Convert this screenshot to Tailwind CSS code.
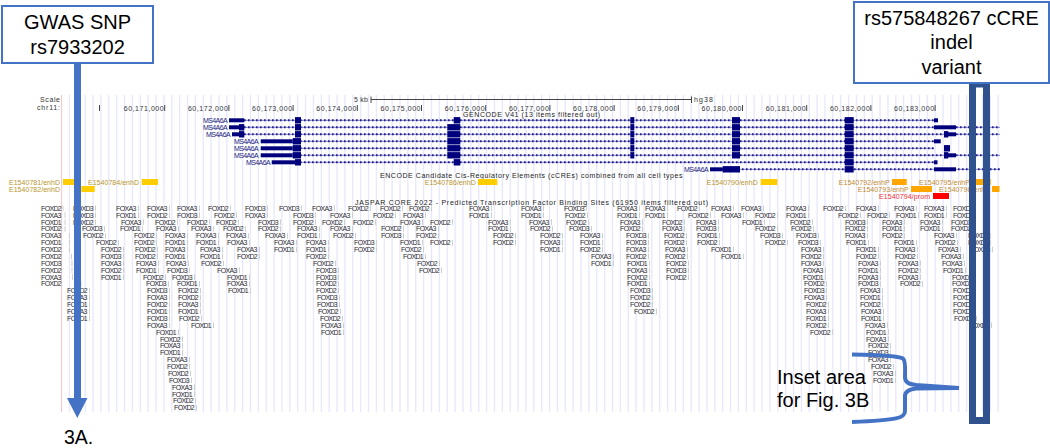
<!DOCTYPE html>
<html lang="en">
<head>
  <meta charset="UTF-8" />
  <title>MS4A6A locus, FOX binding sites</title>
  <script src="https://cdn.jsdelivr.net/npm/@tailwindcss/browser@4"></script>
</head>
<body class="bg-white">
  <div class="relative w-[1050px] h-[448px] overflow-hidden bg-white font-['Liberation_Sans',sans-serif] text-black">

    <!-- Browser tracks: free canvas -->
    <svg class="absolute inset-0" width="1050" height="448" viewBox="0 0 1050 448">
      <g id="grid" class="stroke-[#e7e7fd] stroke-[1.3]"></g>
      <line x1="61.6" y1="95" x2="61.6" y2="412" class="stroke-[#f7c4c4]" />

      <!-- Scale + ruler -->
      <g class="text-[7px] fill-[#333]">
        <text x="40" y="102" textLength="20">Scale</text>
        <text x="37" y="110" textLength="23">chr11:</text>
        <text x="354" y="102" textLength="14">5 kb</text>
        <text x="694" y="102" textLength="19">hg38</text>
      </g>
      <path d="M371 96.5V103M371 99.5H691.5M691.5 96.5V103" class="stroke-[#444] fill-none" />
      <line x1="99.5" y1="105" x2="99.5" y2="111" class="stroke-[#444]" />
      <g id="ruler" class="text-[7px] fill-[#333]"></g>

      <text x="463" y="116.5" textLength="137" class="text-[7px] fill-[#222]">GENCODE V41 (13 items filtered out)</text>
      <g id="genes"></g>
      <g id="geneLabels" class="text-[7px] fill-[#1a1a80] tracking-[-0.6px]"></g>

      <!-- cCRE track -->
      <text x="380" y="177.5" textLength="302.5" class="text-[7px] fill-[#222]">ENCODE Candidate Cis-Regulatory Elements (cCREs) combined from all cell types</text>
      <g id="ccre" class="text-[7px]"></g>

      <!-- JASPAR track -->
      <text x="355" y="204.5" textLength="353" class="text-[7px] fill-[#222]">JASPAR CORE 2022 - Predicted Transcription Factor Binding Sites (61950 items filtered out)</text>
      <g id="ticks" class="stroke-[#cfcfcf]"></g>
      <g id="sites" class="text-[7px] fill-[#2c2c2c] tracking-[-0.65px]"></g>

      <!-- Annotations on top -->
      <path d="M77.5 64V398" class="stroke-[#4472c4] stroke-[7] fill-none" />
      <path d="M67 398H87.5L77.3 418Z" class="fill-[#4472c4]" />
      <rect x="972.5" y="84" width="14" height="336.5" class="fill-none stroke-[#2f528f] stroke-[7]" />
      <path d="M852 354.5C880 355 899 356 903 358.5C906 361 905 371 905 377C905 382 908 384 916 385L959 388L916 388.5C908 389.5 905 392 905 396L905 411C905 418 898 420 852 422" class="fill-none stroke-[#4472c4] stroke-[4]" />
    </svg>

    <!-- Callout boxes -->
    <div class="absolute left-[1px] top-[5px] w-[153px] h-[59px] border-2 border-[#4472c4] bg-white flex flex-col items-center justify-center text-[20px] leading-[24.5px]">
      <span>GWAS SNP</span>
      <span>rs7933202</span>
    </div>
    <div class="absolute left-[853px] top-[1px] w-[197px] h-[83px] border-2 border-[#4472c4] bg-white flex flex-col items-center justify-center text-[20px] leading-[24.5px]">
      <span>rs575848267 cCRE</span>
      <span>indel</span>
      <span>variant</span>
    </div>
    <div class="absolute left-[64px] top-[426px] text-[19.5px] leading-[22px]">3A.</div>
    <div class="absolute left-[777px] top-[366px] text-[20px] leading-[23px]">Inset area<br />for Fig. 3B</div>
  </div>

  <script>
    const NS = 'http://www.w3.org/2000/svg';
    function add(parent, tag, attrs, text) {
      const el = document.createElementNS(NS, tag);
      for (const k in attrs) el.setAttribute(k, attrs[k]);
      if (text) el.textContent = text;
      document.getElementById(parent).appendChild(el);
    }

    // grid lines
    for (let i = 1; i < 120; i++) {
      const x = 61.6 + i * 7.87;
      add('grid', 'line', { x1: x, x2: x, y1: 95, y2: 412 });
    }

    // ruler
    [171,172,173,174,175,176,177,178,179,180,181,182,183].forEach((k, i) => {
      const tick = 164.7 + i * 64.2;
      add('ruler', 'text', { x: tick - 41, y: 110.5, textLength: 40 }, '60,' + k + ',000');
      add('ruler', 'line', { x1: tick, x2: tick, y1: 105, y2: 111, stroke: '#444' });
    });

    // genes: [label x, line from, line to, blocks [x1, x2, half height]]
    const navy = '#00007d';
    const T = 2, E = 3.2;
    const genes = [
      [203, 244, 934, [[229,244.3,T],[295,301,E],[453.7,460.3,E],[630.3,634.3,E],[732,740,E],[844.7,853.7,E],[934,938,T]]],
      [203, 244, 1000, [[229,239,T],[239,244.3,E],[295,301,E],[447.3,460.3,E],[630.3,634.3,E],[732,740,E],[844.7,853.7,E],[934,956,T]]],
      [206, 244, 1000, [[232,239,T],[239,244.3,E],[295,301,E],[447.3,460.3,E],[630.3,634.3,E],[732,740,E],[844.7,853.7,E],[944,948.3,E],[948,956,T]]],
      [234, 300, 934, [[260.7,292.7,T],[292.7,301,E],[447.3,460.3,E],[630.3,634.3,E],[732,740,E],[844.7,853.7,E],[934,940.7,T]]],
      [234, 300, 934, [[260.7,292.7,T],[292.7,301,E],[447.3,460.3,E],[630.3,634.3,E],[732,740,E],[844.7,853.7,E],[944,950,E]]],
      [234, 300, 1000, [[260.7,292.7,T],[292.7,301,E],[447.3,460.3,E],[630.3,634.3,E],[732,740,E],[844.7,853.7,E],[944,948.3,E],[948,956,T]]],
      [246, 300, 934, [[271.7,295,T],[295,301,E],[453.7,460.3,E],[844.7,853.7,E],[934,937.5,T]]],
      [684, 710, 1000, [[710,722.7,T],[722.7,740,E],[844.7,853.7,E],[934,956,T]]],
    ];
    genes.forEach((g, i) => {
      const y = 120.3 + i * 7;
      add('geneLabels', 'text', { x: g[0], y: y + 2.4 }, 'MS4A6A');
      add('genes', 'line', { x1: g[1], x2: g[2], y1: y, y2: y, stroke: '#7a7ac4', 'stroke-width': 1 });
      add('genes', 'line', { x1: g[1], x2: g[2], y1: y, y2: y, stroke: '#20208f', 'stroke-width': 2, 'stroke-dasharray': '1.6 2.4' });
      g[3].forEach(b => add('genes', 'rect', { x: b[0], y: y - b[2], width: b[1] - b[0], height: b[2] * 2, fill: navy }));
    });

    // cCREs: [name, label x, row y, block x1, block x2, colour]
    const gold = '#ffcd00', orange = '#ffa700', red = '#ff0000';
    [
      ['E1540781/enhD', 9, 179, 63, 74, gold, '#b8952a'],
      ['E1540782/enhD', 9, 186, 81.3, 94.7, gold, '#b8952a'],
      ['E1540784/enhD', 88, 179, 141.7, 158, gold, '#b8952a'],
      ['E1540786/enhD', 424.7, 179, 478, 497.3, gold, '#b8952a'],
      ['E1540790/enhD', 706.7, 179, 760.7, 777.3, gold, '#b8952a'],
      ['E1540792/enhP', 838.7, 179, 892, 906.7, orange, '#c08a30'],
      ['E1540795/enhP', 919, 179, 969, 990.7, orange, '#c08a30'],
      ['E1540793/enhP', 857.7, 186, 911, 932, orange, '#c08a30'],
      ['E1540796/enhP', 939, 186, 992, 999.5, orange, '#c08a30'],
      ['E1540794/prom', 879, 193, 933, 949, red, '#f03030'],
    ].forEach(c => {
      add('ccre', 'text', { x: c[1], y: c[2] + 5.5, textLength: 51, fill: c[6] }, c[0]);
      add('ccre', 'rect', { x: c[3], y: c[2], width: c[4] - c[3], height: 6, fill: c[5] });
    });

    // FOX sites, one string per row: x + factor, optional |tick position
    const rows = [
      '41D2|63 73D3 116A3 147A3 177A3 208D2 245D3 279D3 312A3 348D2 380D2 409D2 469A3 521A3 564D3 617A3 645A3 677D2 711A3 741A3 786A3 823D2 856A3 894A3 924A3 953D2',
      '41A3|65 73D3 116D1 147D2 177D3 214D2 245A3 293D3 330A3 373D2 403A3 469D1 521D1 565D2 617D1 645D1 688D2 721A3 755D2 786D1 838D2 867D2 896D1 924D1 953D1',
      '41D1|65 73D2 121A3 155D2 187D2 216D2 258D3 293D2 322D2 353D2 400A3 430D2 488A3 529A3 566D2 620A3 662D2 696A3 742D1 790D2 845D3 882A3 920A3 951D3',
      '41D2|65 82D3 120D1 156A3 191A3 223D2 258D2 297A3 330A3 381D2 416A3 488D1 530D2 569D3 620D2 662A3 696D3 755D2 791D2 845D2 882D1 920D1 951D2',
      '41A3|69.5 83D2 134D2 165A3 196A3 226A3 265A3 297D1 333D2 381D3 416D2 493D2 540D2 580A3 626D3 664D2 697D1 760D3 796D3 845A3 882D2 934A3 968D1',
      '41D1|69.5 96D2 134D2 165D1 196D1 227A3 274A3 306A3 354D3 400D1 430D2 493D2 540A3 580D1 626D3 664D2 697D2 765D2 798D3 846D1 894D1 935D2 968D2',
      '41D2|69.5 101D2 135D2 165A3 200A3 237A3 274D1 306D1 354D2 401D2 540D1 580D2 626A3 665A3 711D1 801A3 856D1 895A3 938A3 970A3',
      '41D2|71.5 101D3 135D2 165D1 200D1 237D2 306D2 403D1 591A3 626D2 665D2 721D1 801D2 856D2 895D2 941A3',
      '41D3|72 101A3 136A3 166A3 201D2 313D2 417D2 591D1 627D1 666D2 801A3 858A3 898A3 942A3',
      '41D2|72 101D2 136D1 167D3 217A3 316D3 419D2 627A3 666D3 803A3 858D1 898D2 943D1',
      '41A3|72.5 101D1 143D2 172D3 227D1 316D3 627D2 666D2 803D1 858A3 898A3 952D3',
      '41D2|81 146D3 177D1 227A3 316D2 627D1 804D2 858D3 900D2 952D3',
      '67D2 147D3 178D2 228D1 316D2 630D3 804D3 860A3 953D3',
      '67A3 147A3 178D2 317D3 630D2 804A3 860D1 953D2',
      '67D1 147D2 178A3 317D3 630D2 806D2 860D2 953D2',
      '67A3 147D1 178D1 318D2 634D2 806A3 861A3 953D3',
      '67D1 147D3 179D2 320D2 806D1 861D1 954D1',
      '147A3 191D1 321A3 806D2 865A3 969D1',
      '156D1 321D1 810D2 866D1',
      '160D2 866A3',
      '160A3 868D2',
      '160D1 868D3',
      '167A3 868A3',
      '167D2 871D2',
      '168D2 873A3',
      '169D3 873D1',
      '172A3',
      '172D1',
      '173D2',
      '174D2',
    ];
    rows.forEach((row, i) => {
      const y = 208.3 + i * 6.88;
      row.split(' ').forEach(item => {
        const m = item.match(/^(\d+)([AD]\d)(?:\|(.+))?$/);
        const x = +m[1];
        const t = m[3] ? +m[3] : x + 22.5;
        add('sites', 'text', { x: x, y: y + 2.5 }, 'FOX' + m[2]);
        add('ticks', 'line', { x1: t, x2: t, y1: y - 2.8, y2: y + 2.8 });
      });
    });
  </script>
</body>
</html>
